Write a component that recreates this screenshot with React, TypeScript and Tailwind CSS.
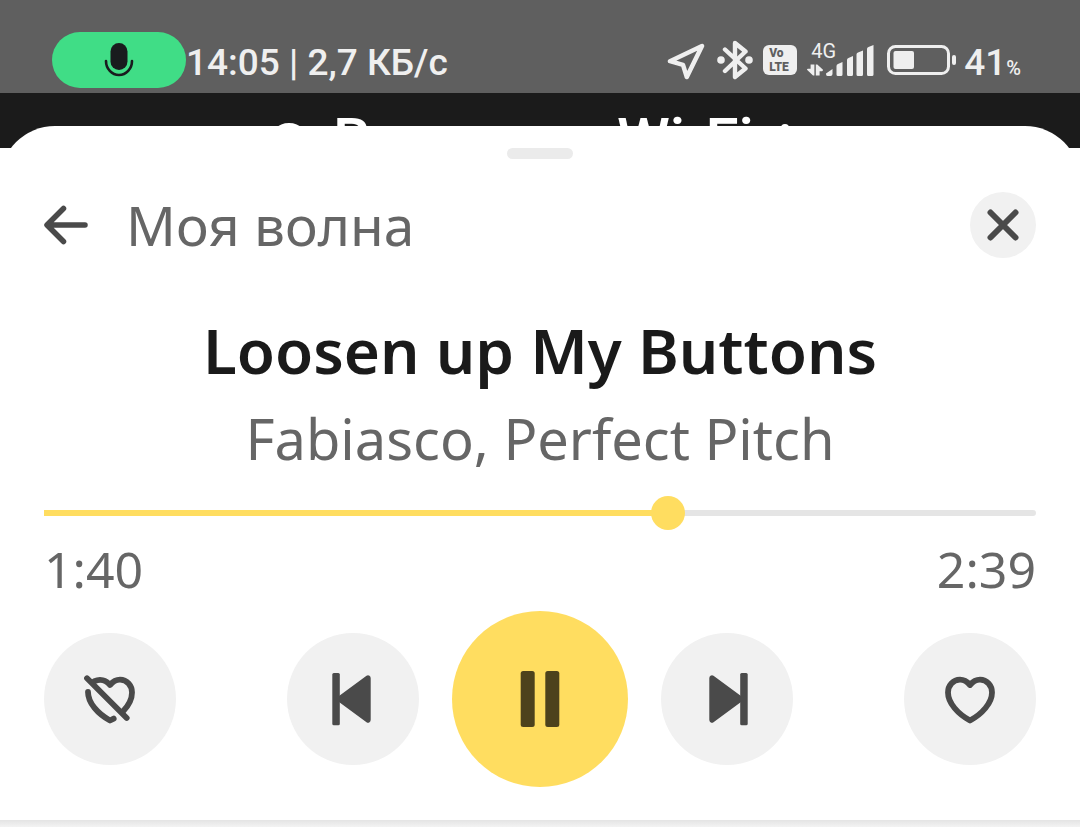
import { FC, ReactNode, useState } from 'react';

const formatTime = (seconds: number) => `${Math.floor(seconds / 60)}:${String(Math.floor(seconds % 60)).padStart(2, '0')}`;

const MicIcon: FC = () => (
  <svg className="w-9 h-9" viewBox="0 0 36 36" fill="none">
    <rect x="9.5" y="1" width="17" height="27" rx="8.5" fill="#191c1e" />
    <path d="M5 19a13 14 0 0 0 26 0" stroke="#191c1e" strokeWidth="2.6" strokeLinecap="round" />
  </svg>
);

const LocationIcon: FC = () => (
  <svg className="w-10 h-10" viewBox="0 0 40 40" fill="none" stroke="currentColor" strokeWidth="4.5" strokeLinejoin="round">
    <path d="M4 21.2 36 6 20.8 37 17 24.8Z" />
  </svg>
);

const BluetoothIcon: FC = () => (
  <svg className="w-9 h-10" viewBox="0 0 36 40" fill="none" stroke="currentColor" strokeWidth="4.4" strokeLinejoin="round">
    <path d="M8 9.5 28.5 28.5 18 37V3L28.5 11.5 8 31" strokeLinecap="round" />
    <circle cx="4" cy="20" r="3.8" fill="currentColor" stroke="none" />
    <circle cx="32" cy="20" r="3.8" fill="currentColor" stroke="none" />
  </svg>
);

const SignalIcon: FC = () => (
  <svg className="w-[68px] h-[31px]" viewBox="0 0 68 31" fill="currentColor">
    <path d="M3.6 19.5h3.800V30.500H6L0 24.800q0-1 1-1h2.600ZM8.800 30.500V19.500h1.500L16 24.800q0 1.400-1 1.400h-2.400V30.500Z" />
    <path d="M19 28.5 25.5 24v5q0 2-2 2h-3q-1.5 0-1.5-2ZM29.5 21q0-1.5 1.5-2l4.5-2V29.5q0 1.5-1.5 1.5h-3q-1.5 0-1.5-1.5ZM40 15q0-1.5 1.5-2l4.5-2V29.5q0 1.5-1.5 1.5h-3q-1.5 0-1.5-1.5ZM49.5 9.5q0-1.5 1.5-2L56 5.500V29.5q0 1.5-1.5 1.5H51q-1.5 0-1.5-1.5ZM60 4q0-1.5 1.5-2L66.5 0V29.5q0 1.5-1.5 1.5h-3.5q-1.5 0-1.5-1.5Z" />
  </svg>
);

const BatteryIcon: FC = () => (
  <svg className="w-[69px] h-[30px]" viewBox="0 0 69 30" fill="none">
    <rect x="1.5" y="1.5" width="60" height="27" rx="7" stroke="currentColor" strokeWidth="3" />
    <rect x="6.5" y="6" width="20.5" height="18" rx="2" fill="currentColor" />
    <rect x="65" y="10" width="4" height="10" rx="2" fill="currentColor" />
  </svg>
);

const BackIcon: FC = () => (
  <svg className="w-11 h-11" viewBox="0 0 44 44" fill="none" stroke="#4a4a4a" strokeWidth="5.5" strokeLinecap="round" strokeLinejoin="round">
    <path d="M41 22H4M19.5 5.5 3 22 19.5 38.5" />
  </svg>
);

const CloseIcon: FC = () => (
  <svg className="w-[66px] h-[66px]" viewBox="0 0 66 66" fill="none" stroke="#4a4a4a" strokeWidth="6" strokeLinecap="round">
    <path d="M20.5 20.5 45.5 45.5M45.5 20.5 20.5 45.5" />
  </svg>
);

const HeartIcon: FC = () => (
  <svg className="w-[66px] h-[66px]" viewBox="0 0 66 66" fill="none" stroke="#4a4a4a" strokeWidth="5.8" strokeLinejoin="round">
    <path d="M33 19C30 15.5 26.5 13.7 23 13.7 16 13.7 11 19.5 11 26.5 11 37 21 48 33 54.5 45 48 55 37 55 26.5 55 19.5 50 13.7 43 13.7 39.5 13.7 36 15.5 33 19Z" />
  </svg>
);

const DislikeIcon: FC = () => (
  <svg className="w-[66px] h-[66px]" viewBox="0 0 66 66" fill="none" stroke="#4a4a4a" strokeWidth="5.8" strokeLinecap="round" strokeLinejoin="round">
    <path d="M10 12.3 49.7 52" />
    <path d="M17.5 15.2C23 12.5 29 14 33 19 36 15.5 39.5 13.7 43 13.7 50 13.7 55 19.5 55 26.5 55 33 51.5 39.5 46.3 45" />
    <path d="M11 26C11 37 21 48 33 54.5L36.7 52.6" />
  </svg>
);

const PreviousIcon: FC = () => (
  <svg className="w-[66px] h-[66px]" viewBox="0 0 66 66" fill="#4a4a4a">
    <rect x="12.3" y="7" width="7.5" height="52.3" rx="1.5" />
    <path d="M19 30 46.5 9.8q1.5-1 3 0 1.2.8 1.2 2.5V53.7q0 1.7-1.2 2.500-1.5 1-3 0L19 36Z" />
  </svg>
);

const NextIcon: FC = () => (
  <svg className="w-[66px] h-[66px]" viewBox="0 0 66 66" fill="#4a4a4a">
    <rect x="46.2" y="7" width="7.5" height="52.3" rx="1.5" />
    <path d="M47 30 19.5 9.8q-1.5-1-3 0-1.2.8-1.2 2.5V53.7q0 1.7 1.2 2.500 1.5 1 3 0L47 36Z" />
  </svg>
);

const PauseIcon: FC = () => (
  <svg className="w-[66px] h-[66px]" viewBox="0 0 66 66" fill="#4d421c">
    <rect x="13.7" y="5" width="14" height="56" rx="2.5" />
    <rect x="38.3" y="5" width="14" height="56" rx="2.5" />
  </svg>
);

const RoundButton: FC<{ label: string, children: ReactNode }> = (props) => (
  <button type="button" aria-label={props.label} className="flex items-center justify-center size-[132px] rounded-full bg-[#f1f1f1] cursor-pointer">
    {props.children}
  </button>
);

const StatusBar: FC = () => (
  <div className="flex justify-between items-start h-[93px] pt-8 pl-[52px] pr-[59px] bg-[#5f5f5f] text-[#efefef] font-['Roboto',sans-serif]">
    <div className="flex items-start">
      <div className="flex items-center justify-center w-[134px] h-14 rounded-full bg-[#40dd86]">
        <MicIcon />
      </div>
      <div className="pt-[3px] text-[37px] leading-14 font-medium whitespace-nowrap">14:05 | 2,7 КБ/с</div>
    </div>
    <div className="flex items-center h-14">
      <LocationIcon />
      <div className="w-[11px]" />
      <BluetoothIcon />
      <div className="flex flex-col justify-center w-[34px] h-[30px] ml-2.5 px-1.5 rounded-md bg-[#efefef] text-[#5f5f5f] text-xs leading-[14px] font-black">
        <span>Vo</span>
        <span>LTE</span>
      </div>
      <div className="relative ml-2.5">
        <SignalIcon />
        <span className="absolute left-1 -top-1.5 text-xl leading-6">4G</span>
      </div>
      <div className="ml-3">
        <BatteryIcon />
      </div>
      <div className="flex items-baseline pt-1.5 ml-2 leading-14 font-medium">
        <span className="text-[37px]">41</span>
        <span className="text-xl">%</span>
      </div>
    </div>
  </div>
);

// Strip of the screen behind the sheet, only the tops of its title stay visible
const Backdrop: FC = () => (
  <div className="flex h-[55px] pt-[15px] pl-[269px] overflow-hidden bg-[#1b1b1b] text-white font-['Roboto',sans-serif] text-[60px] leading-16 font-medium">
    <div className="size-10 mt-[15px] rounded-full border-4 border-white" />
    <span className="ml-6">В</span>
    <span className="ml-[246px]">Wi-Fi</span>
    <div className="size-2 mt-4 ml-[27px] rounded-full bg-white" />
  </div>
);

const Player: FC = () => {
  const duration = 159;
  const [position, setPosition] = useState(100.8);
  const percent = (position / duration) * 100;

  return (
    <div className="relative -mt-[22px] flex flex-col items-stretch px-11 pt-[22px] pb-[33px] rounded-t-[55px] bg-white">
      <div className="self-center w-[66px] h-[11px] rounded-full bg-[#ebebeb]" />
      <div className="flex items-center mt-[33px]">
        <button type="button" aria-label="Назад" className="cursor-pointer">
          <BackIcon />
        </button>
        <h2 className="flex-1 ml-[38px] text-[55px] leading-[66px] text-[#666666]">Моя волна</h2>
        <button type="button" aria-label="Закрыть" className="rounded-full bg-[#f1f1f1] cursor-pointer">
          <CloseIcon />
        </button>
      </div>
      <h1 className="mt-[50px] text-center text-[62px] leading-[84px] font-semibold text-[#1a1a1a]">Loosen up My Buttons</h1>
      <p className="mt-1 text-center text-[56px] leading-[84px] text-[#666666]">Fabiasco, Perfect Pitch</p>
      <input
        type="range"
        aria-label="Позиция"
        min={0}
        max={duration}
        step="any"
        value={position}
        onChange={(e) => setPosition(Number(e.target.value))}
        className="block w-full h-1.5 mt-[30px] rounded-r-full appearance-none cursor-pointer [&::-webkit-slider-thumb]:appearance-none [&::-webkit-slider-thumb]:size-[34px] [&::-webkit-slider-thumb]:rounded-full [&::-webkit-slider-thumb]:bg-[#ffdd60]"
        style={{ background: `linear-gradient(to right, #ffdd60 ${percent}%, #e5e5e5 ${percent}%)` }}
      />
      <div className="flex justify-between mt-[23px] text-[50px] leading-[60px] text-[#666666]">
        <span>{formatTime(position)}</span>
        <span>{formatTime(duration)}</span>
      </div>
      <div className="flex items-center justify-between mt-3">
        <RoundButton label="Не нравится"><DislikeIcon /></RoundButton>
        <div className="flex items-center gap-[33px]">
          <RoundButton label="Предыдущий трек"><PreviousIcon /></RoundButton>
          <button type="button" aria-label="Пауза" className="flex items-center justify-center size-44 rounded-full bg-[#ffdd60] cursor-pointer">
            <PauseIcon />
          </button>
          <RoundButton label="Следующий трек"><NextIcon /></RoundButton>
        </div>
        <RoundButton label="Нравится"><HeartIcon /></RoundButton>
      </div>
    </div>
  );
};

export default function App() {
  return (
    <div className="flex flex-col items-stretch min-h-screen bg-white font-['Noto_Sans',sans-serif]">
      <StatusBar />
      <Backdrop />
      <Player />
      <div className="flex-1 bg-linear-to-b from-[#e4e4e4] to-[#f3f3f3]" />
    </div>
  );
}
